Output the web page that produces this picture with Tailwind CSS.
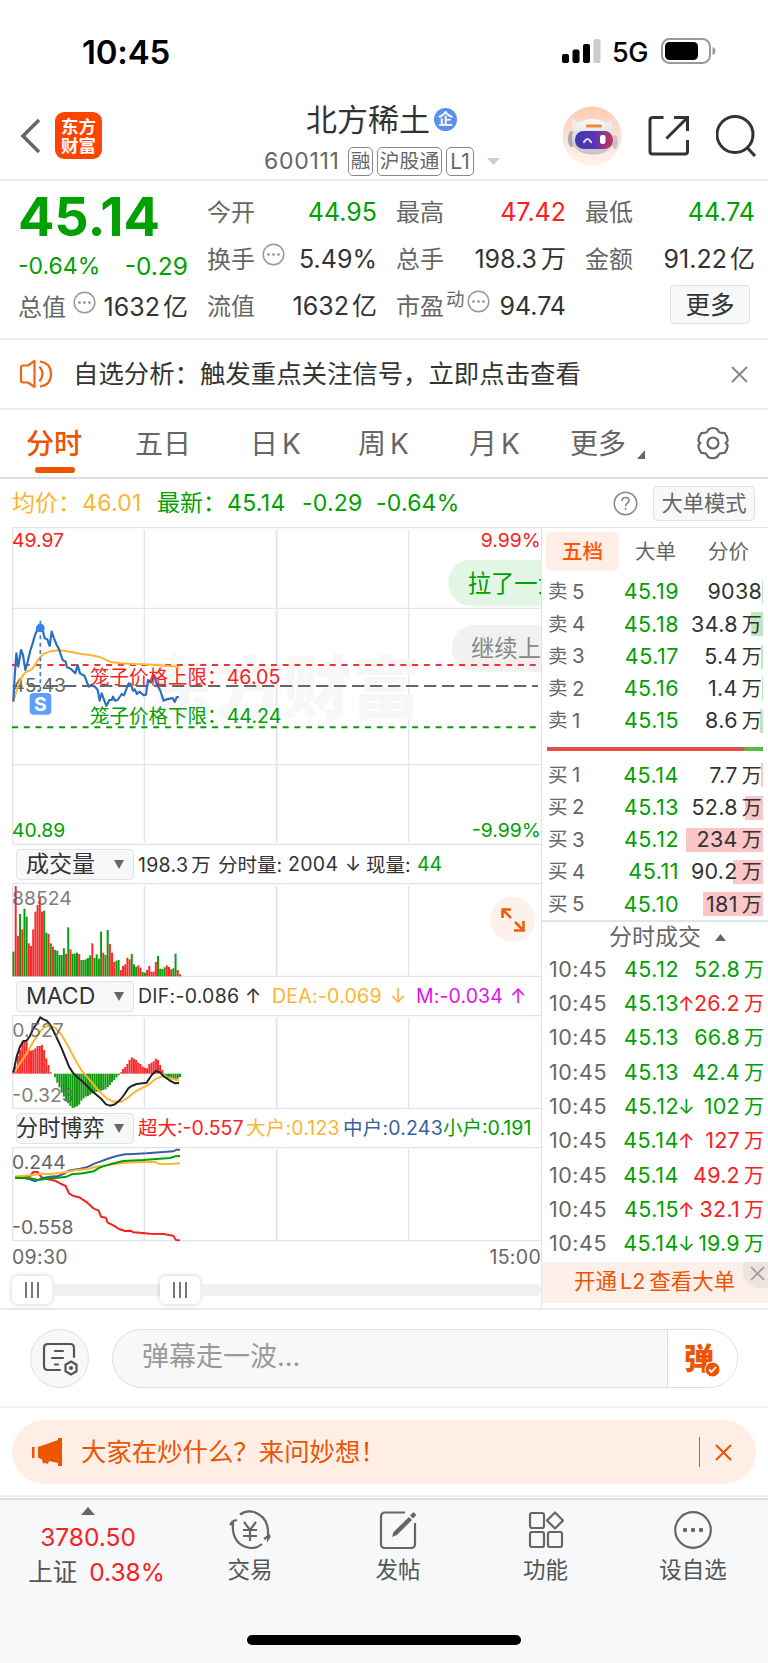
<!DOCTYPE html>
<html lang="zh-CN">
<head>
    <meta charset="UTF-8">
    <meta name="viewport" content="width=device-width, initial-scale=1.0">
    <title>北方稀土 600111</title>
    <script src="https://cdn.jsdelivr.net/npm/@tailwindcss/browser@4"></script>
    <style>
        body {
            font-family: Inter, 'Noto Sans CJK SC', sans-serif;
        }
    </style>
</head>
<body class="bg-white text-[#333] w-[768px] h-[1663px] overflow-hidden">
    <!-- Status bar -->
    <div class="h-[100px] pl-[82px] pr-[52px] flex items-center justify-between text-black">
        <div class="text-[33px] font-semibold leading-none mt-[4px] tracking-[-0.200px]">10:45</div>
        <div class="flex items-center mt-[2px]">
            <svg width="39" height="25" viewBox="0 0 39 25">
                <rect x="0" y="15" width="7" height="9" rx="2"/>
                <rect x="10.500" y="10.500" width="7" height="13.500" rx="2"/>
                <rect x="21" y="5" width="7" height="19" rx="2"/>
                <rect x="31.500" y="0" width="7" height="24" rx="2" fill="#ccc"/>
            </svg>
            <span class="text-[27px] font-medium leading-none ml-[11px] w-[38px] mt-[2px] tracking-[-0.500px]">5G</span>
            <svg class="ml-[11px]" width="55" height="26" viewBox="0 0 55 26">
                <rect x="1" y="1" width="48" height="24" rx="7.500" fill="none" stroke="#999" stroke-width="2"/>
                <rect x="4" y="4" width="33" height="18" rx="4.500"/>
                <path d="M51.500 9q3 1 3 4t-3 4z" fill="#999"/>
            </svg>
        </div>
    </div>

    <!-- Title bar -->
    <div class="h-[81px] border-b-2 border-[#ebebed] pl-[20px] pr-[6px] flex items-start">
        <svg class="mt-[18px] shrink-0" width="22" height="36" viewBox="0 0 22 36" fill="none" stroke="#666" stroke-width="3.500"><path d="M19 2L3 18l16 16"/></svg>
        <div class="mt-[12px] ml-[13px] w-[47px] h-[47px] shrink-0 rounded-[9px] bg-[#ff4400] text-white text-[17.500px] leading-[19px] font-bold flex items-center justify-center text-center"><span>东方<br>财富</span></div>
        <div class="ml-[162px] w-[238px] shrink-0">
            <div class="flex items-center h-[38px] ml-[42px]">
                <span class="text-[31px] leading-none">北方稀土</span>
                <span class="ml-[4px] w-[23px] h-[23px] rounded-full bg-[#5b8ff0] text-white text-[15px] leading-[22px] text-center font-bold">企</span>
            </div>
            <div class="flex items-center h-[46px] text-[#666] leading-none">
                <span class="text-[23px] w-[84px] tracking-[0.700px]">600111</span>
                <span class="border-[1.500px] border-[#888] rounded-[5px] w-[25px] h-[29px] text-[19.500px] leading-[26px] flex justify-center">融</span>
                <span class="ml-[4px] border-[1.500px] border-[#888] rounded-[5px] w-[65px] h-[29px] text-[19.800px] leading-[26px] flex justify-center">沪股通</span>
                <span class="ml-[4px] border-[1.500px] border-[#888] rounded-[5px] w-[28px] h-[29px] text-[21px] leading-[27px] flex justify-center">L1</span>
                <svg class="ml-[13px] shrink-0" width="13" height="7" viewBox="0 0 13 7" fill="#ccc"><path d="M0 0h13L6.500 7z"/></svg>
            </div>
        </div>
        <svg class="mt-[6px] ml-[60px] shrink-0" width="60" height="60" viewBox="0 0 60 60">
            <defs>
                <linearGradient id="halo" x1="0" y1="0" x2="0" y2="1"><stop offset="0" stop-color="#ffccb4"/><stop offset="1" stop-color="#fff3ed"/></linearGradient>
                <linearGradient id="visor" x1="0" y1="0" x2="1" y2="0"><stop offset="0" stop-color="#3d3aa8"/><stop offset=".5" stop-color="#5a35b5"/><stop offset="1" stop-color="#c93757"/></linearGradient>
                <linearGradient id="shell" x1="0" y1="0" x2="0" y2="1"><stop offset="0" stop-color="#fafafa"/><stop offset="1" stop-color="#c2c2c8"/></linearGradient>
            </defs>
            <circle cx="30" cy="30" r="29.500" fill="url(#halo)"/>
            <path d="M10 11q-1 6 2 11l8-6q-8 0-10-5zM50 13q1 6-1 10l-8-7q7 1 9-3z" fill="#ececee"/>
            <ellipse cx="9.500" cy="33" rx="3.500" ry="8" fill="#a9a9b2"/><ellipse cx="53" cy="36" rx="3" ry="7" fill="#c4c4cc"/>
            <path d="M31 13c12 0 20.500 8 20.500 20 0 10-8 15.500-20.500 15.500S10 43 10 32c0-12 9-19 21-19z" fill="url(#shell)"/>
            <rect x="24" y="18.500" width="16" height="3" rx="1.500" fill="#f0883c"/>
            <rect x="13" y="25" width="38" height="18" rx="8.500" fill="url(#visor)"/>
            <path d="M22 36q3.500-6 7 0" fill="none" stroke="#d9e2ff" stroke-width="2.200" stroke-linecap="round"/>
            <rect x="38" y="29" width="5.500" height="9" rx="2.200" fill="#fff"/>
        </svg>
        <svg class="mt-[15px] ml-[26px] shrink-0" width="42" height="42" viewBox="0 0 42 42" fill="none" stroke="#333" stroke-width="3">
            <path d="M15.500 2.500H5Q2 2.500 2 5v31.500q0 2.500 2.500 2.500H37q2.500 0 2.500-2.500V25M26 2.500h13.500V16M39 3L18.500 23.500"/>
        </svg>
        <svg class="mt-[14px] ml-[26px] shrink-0" width="42" height="43" viewBox="0 0 42 43" fill="none" stroke="#333" stroke-width="3">
            <circle cx="19" cy="20.500" r="18"/><path d="M31.500 34l7.500 8"/>
        </svg>
    </div>

    <!-- Quote summary -->
    <div class="h-[159px] border-b-2 border-[#ebebed] pl-[19px] pr-[13px] pt-[8px] flex gap-[20px] leading-none">
        <div class="w-[169px] shrink-0">
            <div class="text-[54px] font-bold text-[#00a000] h-[58px] leading-[56px] -ml-px tracking-[-0.200px]">45.14</div>
            <div class="flex justify-between items-center h-[38px] -ml-px text-[#00a000]"><span class="text-[23px]">-0.64%</span><span class="text-[24.500px] mt-px">-0.29</span></div>
            <div class="flex items-center h-[45px] text-[25px]">
                <span class="text-[24px] text-[#666] -ml-px">总值</span>
                <svg class="ml-[7px] mb-[10px] shrink-0" width="23" height="23" viewBox="0 0 23 23"><circle cx="11.500" cy="11.500" r="10.300" fill="none" stroke="#999" stroke-width="1.500"/><g fill="#888"><circle cx="6.500" cy="11.500" r="1.300"/><circle cx="11.500" cy="11.500" r="1.300"/><circle cx="16.500" cy="11.500" r="1.300"/></g></svg>
                <span class="ml-auto whitespace-nowrap">1632<span class="ml-[3px]">亿</span></span>
            </div>
        </div>
        <div class="grid grid-cols-3 gap-x-[20px] auto-rows-[47px] flex-1 text-[25px]">
            <div class="flex items-center justify-between"><span class="text-[24px] text-[#666] -ml-px">今开</span><span class="text-[#00a000]">44.95</span></div>
            <div class="flex items-center justify-between"><span class="text-[24px] text-[#666] -ml-px">最高</span><span class="text-[#fa2020]">47.42</span></div>
            <div class="flex items-center justify-between"><span class="text-[24px] text-[#666] -ml-px">最低</span><span class="text-[#00a000]">44.74</span></div>
            <div class="flex items-center">
                <span class="text-[24px] text-[#666] -ml-px">换手</span>
                <svg class="ml-[7px] mb-[10px]" width="23" height="23" viewBox="0 0 23 23"><circle cx="11.500" cy="11.500" r="10.300" fill="none" stroke="#999" stroke-width="1.500"/><g fill="#888"><circle cx="6.500" cy="11.500" r="1.300"/><circle cx="11.500" cy="11.500" r="1.300"/><circle cx="16.500" cy="11.500" r="1.300"/></g></svg>
                <span class="ml-auto">5.49%</span>
            </div>
            <div class="flex items-center justify-between"><span class="text-[24px] text-[#666] -ml-px">总手</span><span>198.3<span class="ml-[4px]">万</span></span></div>
            <div class="flex items-center justify-between"><span class="text-[24px] text-[#666] -ml-px">金额</span><span>91.22<span class="ml-[3px]">亿</span></span></div>
            <div class="flex items-center justify-between"><span class="text-[24px] text-[#666] -ml-px">流值</span><span>1632<span class="ml-[3px]">亿</span></span></div>
            <div class="flex items-center">
                <span class="text-[24px] text-[#666] -ml-px">市盈</span>
                <span class="text-[18.500px] text-[#666] mb-[14px] ml-[2px]">动</span>
                <svg class="ml-[2px] mb-[10px]" width="23" height="23" viewBox="0 0 23 23"><circle cx="11.500" cy="11.500" r="10.300" fill="none" stroke="#999" stroke-width="1.500"/><g fill="#888"><circle cx="6.500" cy="11.500" r="1.300"/><circle cx="11.500" cy="11.500" r="1.300"/><circle cx="16.500" cy="11.500" r="1.300"/></g></svg>
                <span class="ml-auto">94.74</span>
            </div>
            <div class="flex items-center justify-end"><span class="w-[80px] h-[39px] mr-[5px] mt-[-4px] rounded-[4px] border-[1.500px] border-[#e0e2e8] bg-[#f7f8fa] text-center leading-[38px] text-[24.500px]">更多</span></div>
        </div>
    </div>

    <!-- Notice -->
    <div class="h-[70px] border-b-2 border-[#ebebed] pl-[19px] pr-[20px] flex items-center">
        <svg width="34" height="30" viewBox="0 0 34 30" fill="none" stroke="#f06418" stroke-width="2.200" stroke-linejoin="round">
            <path d="M15.500 2v26L9 23.500H4Q2 23.500 2 21V9Q2 6.500 4 6.500h5z"/><path d="M20.500 7.500q6 7.500 0 15M21 2.500q11 1.500 11 12.500T21 27.500"/>
        </svg>
        <span class="text-[25.400px] ml-[20px] leading-none">自选分析：触发重点关注信号，立即点击查看</span>
        <svg class="ml-auto" width="17" height="17" viewBox="0 0 17 17" stroke="#888" stroke-width="2"><path d="M1 1l15 15M16 1L1 16"/></svg>
    </div>

    <!-- Period tabs -->
    <div class="h-[69px] border-b-2 border-[#dddde6] pl-[26px] flex items-start pt-[19px] text-[28px] leading-[30px] text-[#666]">
        <div class="w-[109px] text-[#eb5500] font-medium">分时<div class="w-[40px] h-[6px] rounded-[3px] bg-[#eb5500] ml-[9px] mt-[8px]"></div></div>
        <div class="w-[115px]">五日</div>
        <div class="w-[108px]">日<span class="ml-[4px]">K</span></div>
        <div class="w-[111px]">周<span class="ml-[4px]">K</span></div>
        <div class="w-[101px]">月<span class="ml-[4px]">K</span></div>
        <div class="w-[67px]">更多</div>
        <svg class="mt-[21px]" width="8" height="9" viewBox="0 0 8 9" fill="#666"><path d="M8 0v9H0z"/></svg>
        <svg class="ml-[51px] mt-[-3px]" width="34" height="34" viewBox="0 0 34 34" fill="none" stroke="#666" stroke-width="2.200" stroke-linejoin="round">
            <path d="M12.500 3.500Q17 .500 21.500 3.500L23 6q1 .800 3 .800l2.500.200q3.500 4 3 8l-1.800 2 1.800 2.200q.500 4-3 7.800l-3 .200q-2 0-3 1.800l-1.500 2q-4.500 2.500-9 0L11 29q-1-1.800-3-1.800L5.500 27q-3.500-4-3-8l1.800-2-1.800-2q-.500-4 3-8L8 6.800q2 0 3-.800z"/><circle cx="17" cy="17" r="5.500"/>
        </svg>
    </div>

    <!-- Average / latest price -->
    <div class="h-[48px] pl-[12px] pr-[13px] flex items-center text-[23px] leading-none whitespace-nowrap">
        <span class="text-[#fcb530] w-[70px] mt-px">均价：</span><span class="text-[#fcb530] w-[75px] mt-px tracking-[0.300px]">46.01</span>
        <span class="text-[#00a000] w-[70px] mt-px">最新：</span><span class="text-[#00a000] w-[75px] mt-px tracking-[0.300px]">45.14</span>
        <span class="text-[#00a000] w-[74px] mt-px tracking-[0.200px]">-0.29</span><span class="text-[#00a000] mt-px tracking-[0.200px]">-0.64%</span>
        <svg class="ml-auto" width="25" height="25" viewBox="0 0 25 25"><circle cx="12.500" cy="12.500" r="11.300" fill="none" stroke="#888" stroke-width="1.500"/><path d="M9 10q0-3.500 3.500-3.500T16 9.800q0 1.700-2 2.700-1.500.800-1.500 3M12.500 17v2" fill="none" stroke="#888" stroke-width="1.600"/></svg>
        <span class="ml-[15px] w-[102px] h-[35px] rounded-[4px] border-[1.500px] border-[#e0e2e8] bg-[#f7f8fa] text-[#666] text-[21.300px] leading-[33px] text-center">大单模式</span>
    </div>

    <div class="flex h-[783px] border-b-2 border-[#ebebed]">
        <!-- Charts -->
        <div class="w-[529px] ml-[12px] shrink-0">
            <svg class="block max-w-none" width="530" height="318" viewBox="36 21 1590 954" font-size="58">
                <g fill="none" stroke="#e3e6ef" stroke-width="4">
                    <path d="M38 972V23H1626M38 973H1626" stroke="#e0e2e6"/>
                    <path d="M38 265H1624M38 734H1624M433 30V967M1226 30V967"/>
                    <path d="M830 30V967" stroke-width="6"/>
                </g>
                <text x="440" y="580" font-size="205" font-weight="900" fill="#f7f7f8">东方财富</text>
                <path d="M1626 119H1414a69.500 69.500 0 0 0 0 139H1626z" fill="#e3f5e5"/>
                <text x="1403" y="216" font-size="70" fill="#00a000">拉了一大</text>
                <path d="M1626 314H1426a70.500 70.500 0 0 0 0 141H1626z" fill="#f1f1f1"/>
                <text x="1413" y="411" font-size="70" fill="#888">继续上涨</text>
                <path d="M38 498H1614" stroke="#666" stroke-width="6" stroke-dasharray="37 17" stroke-dashoffset="8"/>
                <path d="M36 435H1614" stroke="#e33" stroke-width="6" stroke-dasharray="18 17.300"/>
                <path d="M36 622H1614" stroke="#00a000" stroke-width="6" stroke-dasharray="18 17.300"/>
                <text x="36" y="80" fill="#fa2020">49.97</text>
                <text x="1622" y="80" fill="#fa2020" text-anchor="end">9.99%</text>
                <text x="36" y="952" fill="#00a000">40.89</text>
                <text x="1622" y="952" fill="#00a000" text-anchor="end">-9.99%</text>
                <text x="37" y="517" fill="#666">45.43</text>
                <g fill="none" stroke-linejoin="round">
                    <polyline stroke="#fcb530" stroke-width="6" points="40,545 50,510 63,475 75,458 95,448 105,435 115,418 130,402 150,394 180,391 210,395 240,401 270,405 295,410 315,418 330,425 360,430 400,432 430,433 480,436 537,440"/>
                    <polyline stroke="#2a6fc0" stroke-width="6.500" points="40,545 44,470 49,400 55,440 63,390 69,405 76,450 82,430 90,395 98,370 105,345 112,330 121,318 128,330 134,355 142,358 149,378 155,335 162,355 170,375 176,385 188,420 197,425 201,442 212,446 226,460 233,435 240,460 254,468 262,490 267,500 274,495 285,500 293,510 299,542 305,520 319,558 328,540 335,540 339,530 345,542 353,540 365,522 372,526 380,505 386,490 392,492 399,512 404,508 411,522 418,515 432,526 438,524 444,480 452,488 463,465 469,490 480,510 491,542 500,538 510,536 518,534 524,546 530,532 537,530"/>
                    <path d="M121 302V520" stroke="#2d84f0" stroke-width="5" stroke-dasharray="12 10"/>
                </g>
                <circle cx="121" cy="324" r="13" fill="#2d84f0"/>
                <rect x="89" y="519" width="65" height="65" rx="12" fill="#5c9ffb"/>
                <text x="121" y="572" font-size="58" font-weight="700" fill="#fff" text-anchor="middle">S</text>
                <text x="270" y="492" font-size="58.500" fill="#fa2020">笼子价格上限：</text><text x="680" y="492" font-size="59" fill="#fa2020">46.05</text>
                <text x="270" y="608" font-size="58.500" fill="#00a000">笼子价格下限：</text><text x="680" y="608" font-size="59" fill="#00a000">44.24</text>
            </svg>

            <div class="flex items-center h-[38px] pl-[4px] text-[19.500px] leading-none whitespace-nowrap">
                <div class="w-[118px] h-[31px] mr-[4px] rounded-[4px] border-[1.500px] border-[#e0e2e8] bg-[#f7f8fa] flex items-center justify-between pl-[9px] pr-[9px] pt-px text-[23px]">成交量<svg width="10" height="9" viewBox="0 0 10 9" fill="#666"><path d="M0 0h10L5 9z"/></svg></div>
                <span class="w-[80px] mt-[3px] tracking-[0.300px]">198.3<span class="ml-[3px]">万</span></span><span class="w-[70px] mt-[3px]">分时量:</span><span class="w-[57px] mt-[2px] tracking-[0.300px]">2004</span><span class="w-[21px] mt-[2px]">↓</span><span class="w-[51px] mt-[3px]">现量:</span><span class="mt-[2px] text-[#00a000]">44</span>
            </div>

            <div class="relative">
                <svg class="block max-w-none" width="530" height="94" viewBox="36 129 1590 282" font-size="58">
                    <path d="M38 411V131H1626M38 409H1626M433 138V409M1226 138V409" fill="none" stroke="#e0e3ea" stroke-width="4"/>
                    <path d="M830 138V409" stroke="#e3e6ef" stroke-width="6"/>
                    <g id="volume"></g>
                    <text x="36" y="195" fill="#666" fill-opacity=".85">88524</text>
                </svg>
                <svg class="absolute left-[478px] top-[14px]" width="45" height="45" viewBox="0 0 45 45"><circle cx="22.500" cy="22.500" r="22.500" fill="#fdf1eb"/><path d="M12.500 21v-8.500H21M13 13l8 8M33.500 24v9.500H24M33 33l-8-8" fill="none" stroke="#f25c0a" stroke-width="2.600"/></svg>
            </div>

            <div class="flex items-center h-[38px] pl-[4px] text-[19.500px] leading-none whitespace-nowrap">
                <div class="w-[118px] h-[31px] mr-[4px] rounded-[4px] border-[1.500px] border-[#e0e2e8] bg-[#f7f8fa] flex items-center justify-between pl-[9px] pr-[9px] pt-px text-[23px]">MACD<svg width="10" height="9" viewBox="0 0 10 9" fill="#666"><path d="M0 0h10L5 9z"/></svg></div>
                <span class="w-[107px] mt-[2px] tracking-[0.250px]">DIF:-0.086</span><span class="w-[27px] mt-[2px]">↑</span>
                <span class="w-[118px] mt-[2px] tracking-[0.250px] text-[#fcb530]">DEA:-0.069</span><span class="w-[26px] mt-[2px] text-[#fcb530]">↓</span>
                <span class="w-[94px] mt-[2px] tracking-[0.100px] text-[#e012e8]">M:-0.034</span><span class="mt-[2px] text-[#e012e8]">↑</span>
            </div>

            <svg class="block max-w-none" width="530" height="94" viewBox="36 525 1590 282" font-size="58">
                <path d="M38 807V527H1626M38 805H1626M433 533V805M1226 533V805" fill="none" stroke="#e0e3ea" stroke-width="4"/>
                <path d="M830 533V805" stroke="#e3e6ef" stroke-width="6"/>
                <g id="macd"></g>
                <g fill="none" stroke-width="6" stroke-linejoin="round">
                    <polyline stroke="#fcb530" points="42,698 60,670 80,640 100,605 120,575 135,560 150,557 165,563 185,585 205,620 225,658 245,692 265,715 290,745 320,775 340,785 365,785 385,772 405,755 430,742 445,735 465,718 485,709 510,714 537,722"/>
                    <polyline stroke="#222" points="40,697 50,650 60,620 70,603 80,602 90,588 100,565 110,552 121,532 130,538 140,542 150,553 160,572 172,597 185,625 195,650 207,680 218,697 230,710 245,722 260,737 275,752 290,765 305,778 318,793 330,797 345,793 360,780 372,765 385,745 395,738 410,732 440,728 455,705 468,693 480,697 490,708 510,722 525,730 537,729"/>
                </g>
                <g fill="#666" fill-opacity=".85"><text x="37" y="590">0.527</text><text x="37" y="785">-0.323</text></g>
            </svg>

            <div class="flex items-center h-[38px] pl-[4px] text-[19.500px] leading-none whitespace-nowrap">
                <div class="w-[118px] h-[31px] mr-[4px] rounded-[4px] border-[1.500px] border-[#e0e2e8] bg-[#f7f8fa] flex items-center justify-between pr-[9px] pt-px text-[22.200px]"><span class="-ml-px">分时博弈</span><svg width="10" height="9" viewBox="0 0 10 9" fill="#666"><path d="M0 0h10L5 9z"/></svg></div>
                <span class="w-[108px] mt-[2px] text-[#fa2020]">超大:-0.557</span><span class="w-[97px] mt-[2px] text-[#fcb530] tracking-[0.200px]">大户:0.123</span><span class="w-[100px] mt-[2px] text-[#3a5f9f] tracking-[0.200px]">中户:0.243</span><span class="mt-[2px] text-[#00a000]">小户:0.191</span>
            </div>

            <svg class="block max-w-none" width="530" height="95" viewBox="36 201 1590 285" font-size="58">
                <path d="M38 482V203H1626M38 482H1626M433 208V480M1226 208V480" fill="none" stroke="#dfe3ea" stroke-width="4"/>
                <path d="M830 208V480" stroke="#e3e6ef" stroke-width="6"/>
                <g fill="#666"><text x="36" y="266">0.244</text><text x="36" y="462">-0.558</text></g>
                <g fill="none" stroke-width="6" stroke-linejoin="round">
                    <polyline stroke="#fa2020" points="45,290 70,292 90,288 100,276 112,276 125,292 145,298 165,302 180,310 197,318 207,340 220,348 238,352 262,368 280,385 296,392 303,410 318,413 322,427 340,436 357,447 375,453 392,452 400,457 420,458 450,461 490,462 520,467 528,480 540,481"/>
                    <polyline stroke="#3a5f9f" points="45,293 70,293 90,298 105,304 125,295 150,290 175,288 195,280 205,272 240,266 260,262 285,250 300,245 330,234 350,228 375,223 400,222 440,220 480,217 520,214 530,209 540,209"/>
                    <polyline stroke="#fcb530" points="45,290 90,286 125,281 150,282 185,278 200,276 230,270 260,268 290,260 320,256 345,252 375,248 430,246 465,246 475,251 510,252 540,250"/>
                    <polyline stroke="#00a000" points="45,293 90,295 115,300 150,295 175,293 200,290 215,283 250,280 280,274 300,262 330,253 370,243 430,240 480,236 510,234 525,229 540,228"/>
                </g>
            </svg>

            <div class="flex justify-between items-center h-[31px] text-[19.500px] leading-none text-[#666] tracking-[0.300px]"><span>09:30</span><span>15:00</span></div>

            <!-- Time range slider -->
            <div class="flex items-center h-[34px]">
                <div class="w-[40px] h-[28px] rounded-[6px] bg-white shadow-[0_0_5px_rgba(0,0,0,0.2)] flex items-center justify-center gap-[4px]"><i class="w-[2px] h-[16px] bg-[#777]"></i><i class="w-[2px] h-[16px] bg-[#777]"></i><i class="w-[2px] h-[16px] bg-[#777]"></i></div>
                <div class="w-[108px] h-[12px] bg-[#f0f0f3]"></div>
                <div class="w-[40px] h-[28px] rounded-[6px] bg-white shadow-[0_0_5px_rgba(0,0,0,0.2)] flex items-center justify-center gap-[4px]"><i class="w-[2px] h-[16px] bg-[#777]"></i><i class="w-[2px] h-[16px] bg-[#777]"></i><i class="w-[2px] h-[16px] bg-[#777]"></i></div>
                <div class="flex-1 h-[12px] rounded-r-[5px] bg-[#f0f0f3]"></div>
            </div>
        </div>

        <!-- Order book -->
        <div class="flex-1 border-l border-t border-[#e0e2e6] leading-none">
            <div class="flex text-[20.500px] text-[#666] pt-[4px] pl-[4px] h-[48px]">
                <span class="w-[73px] h-[39px] rounded-[6px] bg-[#ffeee6] text-[#ff5500] font-medium leading-[39px] text-center">五档</span>
                <span class="w-[73px] leading-[39px] text-center">大单</span>
                <span class="w-[73px] leading-[39px] text-center">分价</span>
            </div>
            <div id="asks"></div>
            <div class="flex h-[4px] ml-[5px] mr-[6px] mt-[10px] mb-[8px] bg-[#5ab940]"><div class="w-[199px] bg-[#ec4848] [clip-path:polygon(0_0,100%_0,195px_100%,0_100%)]"></div></div>
            <div id="bids"></div>
            <div class="border-t-2 border-[#e3e4ea] mt-[-1px] h-[33px] pl-[24px] flex items-center justify-center text-[23px] text-[#666]">分时成交<svg class="ml-[14px]" width="11" height="7" viewBox="0 0 11 7" fill="#666"><path d="M0 7h11L5.500 0z"/></svg></div>
            <div id="trades"></div>
            <div class="relative bg-[#fdf0ea] h-[41px] mt-[1px] pl-[32px] text-[21.500px] leading-[39px] text-[#eb5500]">开通<span class="ml-[3px] mr-[4px]">L2</span>查看大单
                <div class="absolute right-0 top-0 w-[26px] h-[26px] rounded-bl-[16px] bg-[#ede3df] flex items-center justify-center pl-[3px] pb-[3px]"><svg width="15" height="15" viewBox="0 0 15 15" stroke="#999" stroke-width="1.600"><path d="M1 1l13 13M14 1L1 14"/></svg></div>
            </div>
        </div>
    </div>

    <!-- Comment input -->
    <div class="h-[98px] border-b-2 border-[#f1f1f2] px-[30px] pt-[19px] flex">
        <div class="w-[59px] h-[59px] rounded-full border-[1.500px] border-[#dddfe6] bg-[#f7f8fa] flex items-center justify-center">
            <svg width="36" height="34" viewBox="0 0 36 34" fill="none" stroke="#555" stroke-width="2.200" stroke-linecap="round">
                <path d="M18 28H6q-4 0-4-4V6q0-4 4-4h22q4 0 4 4v9M13 9h8M10 16h11M13 22.500h3"/><path d="M29 19.500l5.500 3.200v6.600L29 32.500l-5.500-3.200v-6.600z"/><circle cx="29" cy="26" r="1" fill="#555"/>
            </svg>
        </div>
        <div class="ml-[23px] flex-1 h-[59px] rounded-full border-[1.500px] border-[#dddfe6] bg-[#f7f8fa] overflow-hidden flex">
            <div class="w-[555px] shrink-0 border-r-[1.500px] border-[#dddfe6] pl-[29px] text-[27px] leading-[53px] text-[#999]">弹幕走一波...</div>
            <div class="flex-1 bg-white relative">
                <span class="absolute left-[16px] top-[12px] text-[30px] leading-[32px] font-black text-[#eb5500]">弹</span>
                <svg class="absolute left-[36px] top-[31px]" width="17" height="17" viewBox="0 0 17 17"><circle cx="8.500" cy="8.500" r="7.500" fill="#eb5500" stroke="#fff"/><path d="M5 8.500l2.500 2.500L12 6" fill="none" stroke="#fff" stroke-width="1.800"/></svg>
            </div>
        </div>
    </div>

    <!-- Promo banner -->
    <div class="h-[89px] border-b-2 border-[#ececee] px-[12px] pt-[12px]">
        <div class="h-[64px] rounded-full bg-[#feeee6] pl-[19px] pr-[24px] flex items-center text-[#eb5500]">
            <svg width="32" height="28" viewBox="0 0 32 28" fill="#eb5500"><path d="M1 9h2.500v11H1zM7 9L27 2V0h4v28h-4v-3l-9-2-1 3-3-1-2 .500-1-4-4-2z"/></svg>
            <span class="ml-[18px] text-[25.400px] leading-none">大家在炒什么？来问妙想！</span>
            <i class="ml-auto w-[1.500px] h-[30px] bg-[#eb5500]"></i>
            <svg class="ml-[15px]" width="17" height="17" viewBox="0 0 17 17" stroke="#eb5500" stroke-width="2"><path d="M1 1l15 15M16 1L1 16"/></svg>
        </div>
    </div>

    <!-- Bottom navigation -->
    <div class="h-[165px] mt-px border-t-2 border-[#dedfe4] bg-[#f7f8fa] relative flex text-[#555] text-[22.500px] leading-none">
        <div class="w-[176px] flex flex-col items-center pt-[7px]">
            <svg width="14" height="8" viewBox="0 0 14 8" fill="#666"><path d="M0 8h14L7 0z"/></svg>
            <span class="text-[24.500px] text-[#fa2020] mt-[10px]">3780.50</span>
            <span class="text-[24.500px] mt-[10px] ml-[17px] whitespace-nowrap">上证<span class="text-[#fa2020] ml-[12px]">0.38%</span></span>
        </div>
        <div class="w-[148px] flex flex-col items-center pt-[10px] gap-[9px]">
            <svg width="42" height="40" viewBox="0 0 42 40" fill="none" stroke="#666" stroke-width="2.200">
                <path d="M11 4.500Q17 0 25 2q15 5 14 23v4l2-3M41 25l-6 4M33 34Q26 40 17 37 2 32 4 11v5M4 11l-3 4M4 11l4-1M15 12l6 8 6-8M21 20v11M14 20h14M14 26h14"/>
            </svg><span>交易</span>
        </div>
        <div class="w-[148px] flex flex-col items-center pt-[10px] gap-[9px]">
            <svg width="38" height="40" viewBox="0 0 38 40" fill="none" stroke="#666" stroke-width="2.200">
                <path d="M26 2.500H6Q2 2.500 2 7v27q0 4 4 4h26q4 0 4-4V13"/><path d="M13 27l1.500-5L30 7l3 3-15 15z" fill="#666" stroke="none"/><path d="M32.500 7L36 3.500" stroke-width="4"/>
            </svg><span>发帖</span>
        </div>
        <div class="w-[147px] flex flex-col items-center pt-[10px] gap-[9px]">
            <svg width="36" height="40" viewBox="0 0 36 40" fill="none" stroke="#666" stroke-width="2.200">
                <rect x="2" y="3" width="14" height="15" rx="2"/><rect x="2" y="22" width="14" height="15" rx="2"/><rect x="20" y="22" width="14" height="15" rx="2"/><path d="M27 2.500l8 8-8 8-8-8z" stroke-linejoin="round"/>
            </svg><span>功能</span>
        </div>
        <div class="w-[148px] flex flex-col items-center pt-[10px] gap-[9px]">
            <svg width="40" height="40" viewBox="0 0 40 40"><circle cx="20" cy="20" r="17.800" fill="none" stroke="#666" stroke-width="2.200"/><g fill="#666"><circle cx="12" cy="20" r="2.200"/><circle cx="20" cy="20" r="2.200"/><circle cx="28" cy="20" r="2.200"/></g></svg><span>设自选</span>
        </div>
        <div class="absolute left-[247px] top-[135px] w-[274px] h-[10px] rounded-full bg-black"></div>
    </div>

    <script>
        const RED = '#fa2a2a';
        const GREEN = '#0f9d0f';

        // top edge of each volume bar, prefixed by its direction
        const volume = 'g335 r138 r288 g222 r268 g206 g230 r310 r318 r268 r215 r195 r172 r215 g212 g278 r282 g310 r320 g330 g332 g345 g345 g325 r342 g262 r328 g341 g341 g338 r342 g360 g360 g358 g354 g346 r310 g354 g343 g356 g275 r338 g345 g270 r312 r338 r366 g362 g360 r390 r378 r373 r353 r358 g342 g373 g380 r376 r383 g396 g398 r390 r378 r395 r395 r366 g348 g386 g387 g382 r376 r381 r388 g385 g341 r390 r403';
        document.getElementById('volume').innerHTML = volume.split(' ').map((bar, i) => {
            const top = Number(bar.slice(1));
            return `<rect x="${37.500 + i * 6.570}" y="${top}" width="6" height="${409 - top}" fill="${bar[0] === 'r' ? RED : GREEN}"/>`;
        }).join('');

        const macd = [690, 680, 648, 630, 605, 600, 605, 628, 632, 630, 625, 618, 618, 615, 630, 655, 675, 697, 701, 712, 728, 742, 758, 770, 782, 790, 798, 804, 802, 799, 794, 782, 775, 770, 768, 764, 760, 757, 755, 754, 752, 750, 748, 742, 735, 726, 720, 712, 706, 697, 687, 681, 672, 660, 652, 656, 660, 668, 672, 680, 683, 685, 672, 668, 664, 656, 660, 675, 690, 705, 712, 715, 718, 718, 718, 716, 711];
        document.getElementById('macd').innerHTML = macd.map((y, i) =>
            `<rect x="${37.500 + i * 6.570}" y="${Math.min(y, 701)}" width="6" height="${Math.abs(701 - y)}" fill="${y < 701 ? RED : GREEN}"/>`
        ).join('');

        // sizes are shown with a small gap before the unit
        const withUnit = size => size.replace('万', '<span class="ml-[4px] text-[20px]">万</span>');

        const asks = [['卖', 5, '45.19', '9038', 1], ['卖', 4, '45.18', '34.8万', 12], ['卖', 3, '45.17', '5.4万', 2], ['卖', 2, '45.16', '1.4万', 1], ['卖', 1, '45.15', '8.6万', 3]];
        const bids = [['买', 1, '45.14', '7.7万', 2], ['买', 2, '45.13', '52.8万', 18], ['买', 3, '45.12', '234万', 77], ['买', 4, '45.11', '90.2万', 30], ['买', 5, '45.10', '181万', 60]];

        function bookRow([side, level, price, size, bar]) {
            const color = side === '卖' ? 'bg-[#bfe8c0]' : 'bg-[#fcc5c8]';
            return `<div class="relative flex items-center h-[32.250px] pl-[6px] pr-[7px] text-[21.500px]">
                <div class="absolute right-[6px] top-[4px] h-[24px] ${color}" style="width:${bar}px"></div>
                <span class="relative w-[24px] text-[19.500px] text-[#666]">${side}</span><span class="relative w-[20px] text-[20.500px] text-[#666]">${level}</span>
                <span class="relative w-[87px] text-right tracking-[0.500px] text-[#00a000]">${price}</span>
                <span class="relative ml-auto whitespace-nowrap tracking-[0.300px]">${withUnit(size)}</span>
            </div>`;
        }
        document.getElementById('asks').innerHTML = asks.map(bookRow).join('');
        document.getElementById('bids').innerHTML = bids.map(bookRow).join('');

        const trades = [['45.12', '', '52.8万', 0], ['45.13', '↑', '26.2万', 1], ['45.13', '', '66.8万', 0], ['45.13', '', '42.4万', 0], ['45.12', '↓', '102万', 0], ['45.14', '↑', '127万', 1], ['45.14', '', '49.2万', 1], ['45.15', '↑', '32.1万', 1], ['45.14', '↓', '19.9万', 0]];
        document.getElementById('trades').innerHTML = trades.map(([price, arrow, size, up]) => `
            <div class="flex items-center h-[34.300px] pl-[7px] pr-[5px] text-[21.500px]">
                <span class="w-[60px] tracking-[0.500px] text-[#666]">10:45</span>
                <span class="w-[70px] text-right tracking-[0.500px] text-[#00a000]">${price}</span>
                <span class="w-[14px] text-[20px] -ml-px ${up ? 'text-[#fa2020]' : 'text-[#00a000]'}">${arrow}</span>
                <span class="ml-auto whitespace-nowrap tracking-[0.200px] ${up ? 'text-[#fa2020]' : 'text-[#00a000]'}">${withUnit(size)}</span>
            </div>`).join('');
    </script>
</body>
</html>
